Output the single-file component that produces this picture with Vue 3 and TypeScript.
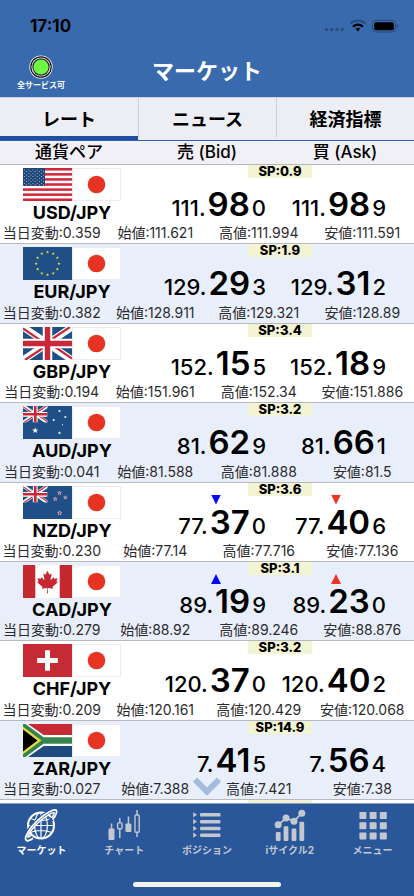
<script setup lang="ts">
import { ref } from 'vue'

type Direction = 'up' | 'down' | null

interface Price {
  whole: string
  pips: string
  point: string
}

interface Rate {
  code: string
  spread: string
  bid: Price
  ask: Price
  move: Direction
  change: string
  open: string
  high: string
  low: string
}

const price = (text: string): Price => {
  const dot = text.indexOf('.')
  return {
    whole: text.slice(0, dot + 1),
    pips: text.slice(dot + 1, dot + 3),
    point: text.slice(dot + 3),
  }
}

const rate = (
  code: string, spread: string, bid: string, ask: string,
  change: string, open: string, high: string, low: string,
  move: Direction = null,
): Rate => ({ code, spread, bid: price(bid), ask: price(ask), change, open, high, low, move })

const rates: Rate[] = [
  rate('USD', '0.9', '111.980', '111.989', '0.359', '111.621', '111.994', '111.591'),
  rate('EUR', '1.9', '129.293', '129.312', '0.382', '128.911', '129.321', '128.89'),
  rate('GBP', '3.4', '152.155', '152.189', '0.194', '151.961', '152.34', '151.886'),
  rate('AUD', '3.2', '81.629', '81.661', '0.041', '81.588', '81.888', '81.5'),
  rate('NZD', '3.6', '77.370', '77.406', '0.230', '77.14', '77.716', '77.136', 'down'),
  rate('CAD', '3.1', '89.199', '89.230', '0.279', '88.92', '89.246', '88.876', 'up'),
  rate('CHF', '3.2', '120.370', '120.402', '0.209', '120.161', '120.429', '120.068'),
  rate('ZAR', '14.9', '7.415', '7.564', '0.027', '7.388', '7.421', '7.38'),
]

const tabs = ['レート', 'ニュース', '経済指標']
const activeTab = ref(0)

const navItems = [
  { id: 'market', label: 'マーケット' },
  { id: 'chart', label: 'チャート' },
  { id: 'position', label: 'ポジション' },
  { id: 'cycle', label: 'iサイクル2' },
  { id: 'menu', label: 'メニュー' },
]
const activeNav = ref('market')

const starPoints = (cx: number, cy: number, r: number): string =>
  Array.from({ length: 10 }, (_, i) => {
    const radius = i % 2 ? r * 0.42 : r
    const angle = (i * Math.PI) / 5 - Math.PI / 2
    return `${cx + radius * Math.cos(angle)},${cy + radius * Math.sin(angle)}`
  }).join(' ')

const euStars = Array.from({ length: 12 }, (_, i) => {
  const angle = (i * Math.PI) / 6
  return starPoints(24.5 + 11.4 * Math.sin(angle), 16.5 - 11.4 * Math.cos(angle), 1.7)
})
const auStars = [
  starPoints(12.2, 24.5, 3.2),
  starPoints(36.5, 5, 1.6),
  starPoints(30.7, 14, 1.6),
  starPoints(42.3, 11, 1.6),
  starPoints(36.5, 27, 1.8),
  starPoints(39.5, 18.5, 0.9),
]
const nzStars = [
  starPoints(36.5, 7, 2),
  starPoints(32.2, 13, 2),
  starPoints(42.3, 11.5, 1.8),
  starPoints(36.7, 27, 2.3),
]
const usStars = Array.from({ length: 50 }, (_, i) => ({
  x: 1.6 + (i % 10) * 2.1,
  y: 2 + Math.floor(i / 10) * 3.3 + (i % 2) * 1.6,
}))
</script>

<template>
  <div class="app">
    <svg class="defs" aria-hidden="true">
      <symbol id="union-jack" viewBox="0 0 49 33" preserveAspectRatio="none">
        <rect width="49" height="33" fill="#1f4f86" />
        <path d="M0 0 49 33M49 0 0 33" stroke="#fff" stroke-width="7" />
        <path d="M0 1.4 22 16.5M49 31.6 27 16.5M47 0 24.5 15M2 33 24.5 18" stroke="#c8283a" stroke-width="2.2" />
        <path d="M24.5 0V33M0 16.5H49" stroke="#fff" stroke-width="9.5" />
        <path d="M24.5 0V33M0 16.5H49" stroke="#c8283a" stroke-width="5.4" />
      </symbol>
    </svg>

    <header class="top">
      <div class="status">
        <span class="clock">17:10</span>
        <svg class="status-icons" viewBox="0 0 74 14" aria-hidden="true">
          <g fill="#2a4d82">
            <circle cx="2.5" cy="10.5" r="1.7" />
            <circle cx="7.7" cy="10.5" r="1.7" />
            <circle cx="12.9" cy="10.5" r="1.7" />
            <circle cx="18.1" cy="10.5" r="1.7" />
          </g>
          <path d="M26.3 4.6a10.6 10.6 0 0 1 15.2 0" fill="none" stroke="#27497b" stroke-width="2" />
          <path d="M29 7.7a6.8 6.8 0 0 1 9.8 0" fill="none" stroke="#000" stroke-width="2.2" />
          <path d="M31.6 9.8a3.3 3.3 0 0 1 4.6 0L33.9 12.5z" fill="#000" />
          <rect x="48.5" y="1.5" width="23" height="11.5" rx="3.4" fill="none" stroke="#27497b" />
          <rect x="50.2" y="3.2" width="19.6" height="8.1" rx="1.9" />
          <path d="M72.8 5.2v4q1.4-.6 1.4-2t-1.4-2z" fill="#27497b" />
        </svg>
      </div>
      <div class="title-bar">
        <div class="service">
          <svg class="lamp" viewBox="0 0 24 24" aria-hidden="true">
            <circle cx="12" cy="12" r="11.6" fill="#fff" />
            <circle cx="12" cy="12" r="10.8" fill="#111" />
            <circle cx="12" cy="12" r="9.6" fill="#fff" />
            <circle cx="12" cy="12" r="8.7" fill="#222" />
            <circle cx="12" cy="12" r="7.6" fill="#6ff843" />
          </svg>
          <span>全サービス可</span>
        </div>
        <h1>マーケット</h1>
      </div>
    </header>

    <nav class="tabs">
      <button
        v-for="(tab, index) in tabs"
        :key="tab"
        type="button"
        class="tab"
        :class="{ active: index === activeTab }"
        @click="activeTab = index"
      >{{ tab }}</button>
    </nav>

    <main class="board">
      <table class="rates">
        <thead>
          <tr class="columns">
            <th scope="col">通貨ペア</th>
            <th scope="col">売 (Bid)</th>
            <th scope="col">買 (Ask)</th>
          </tr>
        </thead>
        <tbody>
          <tr v-for="item in rates" :key="item.code" class="rate">
            <th scope="row" class="pair">
              <span class="flags">
                <svg class="flag" viewBox="0 0 49 33" aria-hidden="true">
                  <template v-if="item.code === 'USD'">
                    <rect width="49" height="33" fill="#fff" />
                    <rect v-for="n in 7" :key="n" :y="(n - 1) * 5.08" width="49" height="2.54" fill="#d0273b" />
                    <rect width="22" height="17.8" fill="#1e4679" />
                    <circle v-for="(s, i) in usStars" :key="i" :cx="s.x" :cy="s.y" r="0.5" fill="#c9d5e6" />
                  </template>
                  <template v-else-if="item.code === 'EUR'">
                    <rect width="49" height="33" fill="#1f4f86" />
                    <polygon v-for="s in euStars" :key="s" :points="s" fill="#e3dc3d" />
                  </template>
                  <use v-else-if="item.code === 'GBP'" href="#union-jack" width="49" height="33" />
                  <template v-else-if="item.code === 'AUD'">
                    <rect width="49" height="33" fill="#1f4f86" />
                    <use href="#union-jack" width="24.5" height="16.5" />
                    <polygon v-for="s in auStars" :key="s" :points="s" fill="#fff" />
                  </template>
                  <template v-else-if="item.code === 'NZD'">
                    <rect width="49" height="33" fill="#1f4f86" />
                    <use href="#union-jack" width="24.5" height="16.5" />
                    <polygon v-for="s in nzStars" :key="s" :points="s" fill="#c8283a" stroke="#dfe5ee" stroke-width="0.5" />
                  </template>
                  <template v-else-if="item.code === 'CAD'">
                    <rect width="49" height="33" fill="#fff" />
                    <path d="M0 0H12.3V33H0zM36.7 0H49V33H36.7z" fill="#c5282f" />
                    <path
                      transform="translate(24.5 17) scale(.0056)"
                      fill="#c5282f"
                      d="m-90 2030 45-863a95 95 0 0 0-111-98l-859 151 116-320a65 65 0 0 0-20-73l-941-762 212-99a65 65 0 0 0 34-79l-186-572 542 115a65 65 0 0 0 73-38l105-247 423 454a65 65 0 0 0 111-57l-204-1052 327 189a65 65 0 0 0 91-27l332-652 332 652a65 65 0 0 0 91 27l327-189-204 1052a65 65 0 0 0 111 57l423-454 105 247a65 65 0 0 0 73 38l542-115-186 572a65 65 0 0 0 34 79l212 99-941 762a65 65 0 0 0-20 73l116 320-859-151a95 95 0 0 0-111 98l45 863z"
                    />
                  </template>
                  <template v-else-if="item.code === 'CHF'">
                    <rect width="49" height="33" fill="#c62a35" />
                    <path d="M24.5 6.2V26.8M14.2 16.5H34.8" stroke="#fff" stroke-width="5" />
                  </template>
                  <template v-else>
                    <rect width="49" height="33" fill="#fff" />
                    <path d="M4 0H49V11H20z" fill="#c62a35" />
                    <path d="M4 33H49V22H20z" fill="#1f4a80" />
                    <path d="M0 0H5L21 11.3H49V12.6H20L2 0M0 33H5L21 21.7H49V20.4H20L2 33" fill="#fff" />
                    <path d="M0 0H2.5L20.5 13.2H49V19.8H20.5L2.5 33H0z" fill="#35844f" />
                    <path d="M0 2.8 18.4 16.5 0 30.2z" fill="#eadb3f" />
                    <path d="M0 5.6 14.5 16.5 0 27.4z" fill="#000" />
                  </template>
                </svg>
                <svg class="flag" viewBox="0 0 49 33" aria-hidden="true">
                  <rect x="0.5" y="0.5" width="48" height="32" fill="#fff" stroke="#ececf0" />
                  <circle cx="24.5" cy="16.5" r="8.8" fill="#e63323" />
                </svg>
              </span>
              <span class="name">{{ item.code }}/JPY</span>
            </th>
            <td class="spread"><span class="badge">SP:{{ item.spread }}</span></td>
            <td class="quote bid">
              <span class="arrow" :class="item.move" />
              <span class="price">{{ item.bid.whole }}<b>{{ item.bid.pips }}</b>{{ item.bid.point }}</span>
            </td>
            <td class="quote ask">
              <span class="arrow" :class="item.move" />
              <span class="price">{{ item.ask.whole }}<b>{{ item.ask.pips }}</b>{{ item.ask.point }}</span>
            </td>
            <td class="stats">
              <span>当日変動:{{ item.change }}</span>
              <span>始値:{{ item.open }}</span>
              <span>高値:{{ item.high }}</span>
              <span>安値:{{ item.low }}</span>
            </td>
          </tr>
          <tr class="rate next">
            <td class="spread"><span class="badge" /></td>
          </tr>
        </tbody>
      </table>
      <svg class="more" viewBox="0 0 28 20" aria-hidden="true">
        <path d="M2 2.5 14 14.5 26 2.5" fill="none" stroke="#a3bbdc" stroke-width="6" />
      </svg>
    </main>

    <footer class="bottom">
      <nav class="nav">
        <button
          v-for="item in navItems"
          :key="item.id"
          type="button"
          class="nav-item"
          :class="{ active: item.id === activeNav }"
          @click="activeNav = item.id"
        >
          <svg viewBox="0 0 32 32" aria-hidden="true">
            <g v-if="item.id === 'market'" fill="none" stroke="currentColor" stroke-width="1.2">
              <circle cx="16" cy="16.5" r="13" stroke-width="2" />
              <ellipse cx="16" cy="16.5" rx="6.4" ry="13" />
              <path d="M16 3.5v26M3 16.5h26M5 9.5q11 4 22 0M5 23.5q11-4 22 0" />
              <path d="M.9 31.1C-1.8 28.3 5 18.6 13 11.2S29.8-.6 31.4 1.9 27 9.6 25.2 11.8" stroke="#29579a" stroke-width="4" />
              <path d="M6.8 25.5C3.6 28.4 2.6 28.6 3 27.3 4.2 23.5 9 17.6 14.2 12.8S27 3.2 29 3.8c1 .8-1.2 3.6-2.6 5.2" stroke-width="1.5" />
              <path d="M8 29.2C4.4 31.8 1.8 32.4.9 31.1-1 28.3 5 18.6 12.4 11.6S29.8-.9 31.4 1.5C32.4 3.6 30 7.6 27.6 10.8" stroke-width="1.8" />
            </g>
            <g v-else-if="item.id === 'chart'" fill="currentColor">
              <rect x="0.5" y="19.5" width="6" height="11.5" rx="1" />
              <rect x="2.8" y="14.5" width="1.5" height="7" />
              <path d="M11.8 9v5M11.8 20v9" stroke="currentColor" stroke-width="1.5" />
              <rect x="9.6" y="13.9" width="4.4" height="5.9" rx="1" fill="none" stroke="currentColor" stroke-width="1.4" />
              <rect x="17.4" y="14.5" width="6" height="8.5" rx="1" />
              <rect x="19.7" y="7.5" width="1.5" height="8" />
              <path d="M29 1v5M29 23v5" stroke="currentColor" stroke-width="1.5" />
              <rect x="27" y="6" width="4.2" height="17.2" rx="1" fill="none" stroke="currentColor" stroke-width="1.4" />
            </g>
            <g v-else-if="item.id === 'position'" fill="currentColor">
              <template v-for="n in 4" :key="n">
                <path :d="`M2.2 ${n * 6.8 - 3.6}l3.8 2.6-3.8 2.6z`" />
                <rect x="9" :y="n * 6.8 - 2.7" width="20.5" height="3.5" rx="1.2" />
              </template>
            </g>
            <g v-else-if="item.id === 'cycle'" fill="currentColor">
              <path d="M4.2 15.8 12 9 20 12.3 27.8 4.2" fill="none" stroke="currentColor" stroke-width="1.7" />
              <circle cx="4.2" cy="15.8" r="3.5" />
              <circle cx="12" cy="9" r="3.5" />
              <circle cx="20" cy="12.3" r="3.5" />
              <circle cx="27.8" cy="4.2" r="3.5" />
              <rect x="1.8" y="23" width="4.8" height="9" rx="1.2" />
              <rect x="9.6" y="17.3" width="4.8" height="14.7" rx="1.2" />
              <rect x="17.6" y="19.6" width="4.8" height="12.4" rx="1.2" />
              <rect x="25.4" y="12.8" width="4.8" height="19.2" rx="1.2" />
            </g>
            <g v-else fill="currentColor">
              <rect
                v-for="n in 9"
                :key="n"
                :x="2.4 + ((n - 1) % 3) * 10.2"
                :y="3 + Math.floor((n - 1) / 3) * 10.2"
                width="7"
                height="7"
                rx="0.8"
              />
            </g>
          </svg>
          <span>{{ item.label }}</span>
        </button>
      </nav>
      <div class="home" />
    </footer>
  </div>
</template>

<style>
body {
  background: #29579a;
}
</style>

<style scoped>
.app {
  display: flex;
  flex-direction: column;
  min-height: 100vh;
  font-family: Inter, "Noto Sans CJK JP", sans-serif;
  color: #000;
  background: #fff;
}

.defs {
  position: absolute;
  width: 0;
  height: 0;
}

button {
  margin: 0;
  padding: 0;
  border: 0;
  background: none;
  font-family: inherit;
  color: inherit;
}

.top {
  background: #3a6aae;
}

.status {
  display: flex;
  align-items: center;
  justify-content: space-between;
  height: 44px;
  padding: 8px 16px 0 30px;
  box-sizing: border-box;
}

.clock {
  font-size: 17px;
  font-weight: 700;
}

.status-icons {
  width: 74px;
  height: 14px;
}

.title-bar {
  display: grid;
  grid-template-columns: 1fr auto 1fr;
  align-items: center;
  height: 53px;
}

.service {
  display: flex;
  flex-direction: column;
  align-items: center;
  justify-self: start;
  gap: 1px;
  width: 82px;
  padding-top: 3px;
  color: #fff;
  font-size: 8px;
  line-height: 10px;
  font-weight: 700;
}

.lamp {
  width: 24px;
  height: 24px;
}

h1 {
  margin: 0;
  color: #fff;
  font-size: 22px;
  line-height: 32px;
  font-weight: 700;
}

.tabs {
  display: grid;
  grid-template-columns: repeat(3, 1fr);
  height: 44px;
  box-sizing: border-box;
  border-top: 1px solid #c9cfdd;
  border-bottom: 1px solid #3563ab;
  background: #edeef3;
}

.tab {
  padding-top: 2px;
  border-bottom: 4px solid transparent;
  font-size: 18px;
  font-weight: 700;
}

.tab + .tab {
  border-left: 1px solid #cfd0d8;
}

.tab.active {
  border-bottom-color: #1f4ea3;
}

.board {
  position: relative;
  display: flex;
  flex: 1;
}

.rates {
  display: flex;
  flex: 1;
  flex-direction: column;
}

.columns {
  display: grid;
  grid-template-columns: repeat(3, 1fr);
  background: #f0f0f6;
}

.columns th {
  padding: 0;
  font-size: 17px;
  line-height: 23px;
  font-weight: 500;
}

tbody {
  display: grid;
  flex: 1;
  grid-template-rows: repeat(8, minmax(79px, 1fr)) 4px;
}

.rate {
  display: grid;
  grid-template-columns: 146px 1fr 1fr 28px;
  grid-template-rows: 12px 1fr 20px;
  border-top: 1px solid #b8b9c0;
  background: #fff;
}

.rate:nth-child(even) {
  background: #e9effa;
}

.next {
  overflow: hidden;
}

.rate td,
.rate th {
  padding: 0;
}

.rate .pair {
  grid-area: 1 / 1 / 3 / 2;
  display: flex;
  flex-direction: column;
  align-items: center;
  gap: 2px;
  padding: 3px 2px 0 0;
}

.flags {
  display: flex;
}

.flag {
  display: block;
  width: 49px;
  height: 33px;
}

.name {
  font-size: 18px;
  line-height: 20px;
  font-weight: 700;
}

.spread {
  grid-area: 1 / 2 / 2 / 5;
  display: flex;
  justify-content: center;
}

.badge {
  width: 64px;
  height: 13px;
  background: #f3f4d4;
  font-size: 13px;
  line-height: 13px;
  font-weight: 800;
  text-align: center;
}

.quote {
  display: flex;
  flex-direction: column;
  align-items: flex-end;
  gap: 2px;
}

.bid {
  grid-area: 2 / 2;
}

.ask {
  grid-area: 2 / 3;
}

.arrow {
  flex: none;
  width: 10px;
  height: 10px;
  margin-right: 45px;
}

.arrow.up,
.arrow.down {
  background: #0a0af5;
}

.ask .arrow.up,
.ask .arrow.down {
  background: #ee3424;
}

.arrow.down {
  clip-path: polygon(0 0, 100% 0, 50% 100%);
}

.arrow.up {
  clip-path: polygon(50% 0, 100% 100%, 0 100%);
}

.price {
  font-size: 22px;
  line-height: 30px;
  font-weight: 500;
  white-space: nowrap;
}

.price b {
  padding: 0 2px;
  font-size: 33px;
  font-weight: 600;
}

.stats {
  grid-area: 3 / 1 / 4 / 5;
  display: grid;
  grid-template-columns: repeat(4, 1fr);
  color: #2b2b2e;
  font-size: 14px;
  line-height: 20px;
  text-align: center;
  white-space: nowrap;
}

.more {
  position: absolute;
  bottom: 6px;
  left: 50%;
  width: 28px;
  height: 20px;
  margin-left: -14px;
}

.bottom {
  display: flex;
  flex-direction: column;
  align-items: center;
  justify-content: space-between;
  height: 93px;
  padding-bottom: 9px;
  box-sizing: border-box;
  border-top: 1px solid #8d9cb8;
  background: #29579a;
}

.nav {
  display: grid;
  grid-template-columns: repeat(5, 1fr);
  width: 100%;
  padding-top: 5px;
}

.nav-item {
  display: flex;
  flex-direction: column;
  align-items: center;
  gap: 2px;
  color: #c3c7d0;
  font-size: 10px;
  line-height: 14px;
  font-weight: 700;
}

.nav-item.active {
  color: #fff;
}

.nav-item svg {
  width: 32px;
  height: 32px;
  overflow: visible;
}

.home {
  width: 148px;
  height: 5px;
  border-radius: 3px;
  background: #f3f3f1;
}
</style>
